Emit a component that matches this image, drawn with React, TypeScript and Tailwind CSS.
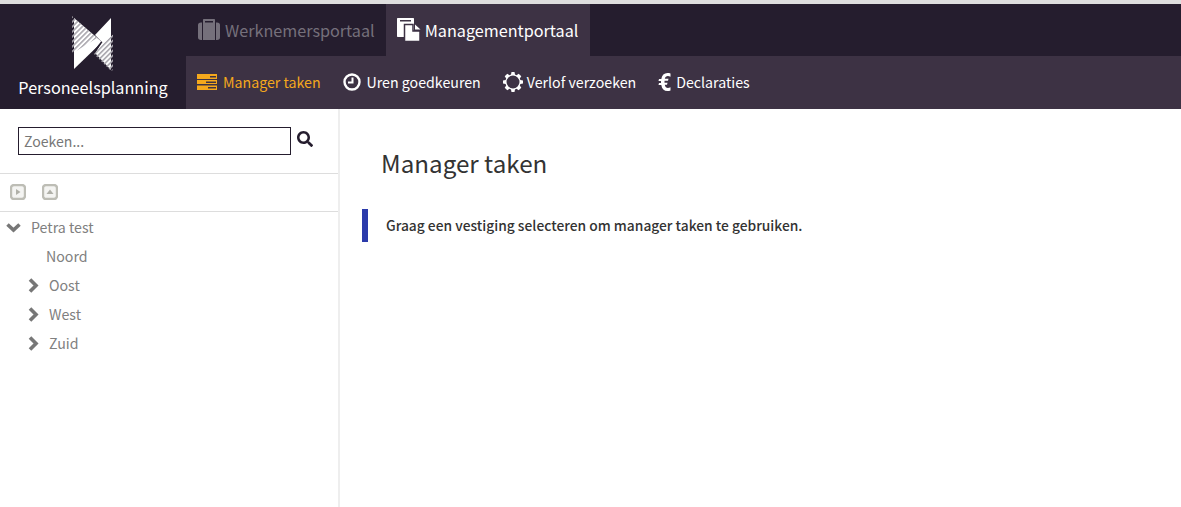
import React from 'react';
import { FaSearch } from 'react-icons/fa';

const LogoMark = () => (
  <svg width="44" height="56" viewBox="0 0 44 56" className="ml-[2px] block">
    <defs>
      <pattern id="hatch" width="3.500" height="3.500" patternUnits="userSpaceOnUse" patternTransform="rotate(-45)">
        <rect width="3.500" height="1.600" fill="#a9a6ad" />
      </pattern>
    </defs>
    <polygon points="2,2 30,26 2,53" fill="#ffffff" />
    <polygon points="39,2 23,19 30,26 23,37 39,54" fill="#ffffff" />
    <polygon points="0,0 25,22 1,37 0,36" fill="url(#hatch)" />
    <polygon points="32,27 22,38 39,55 41,54 41,18" fill="url(#hatch)" />
    <polygon points="29,25.500 30.500,26 23,37 21,36" fill="#251d2e" />
  </svg>
);

const BriefcaseIcon = () => (
  <svg width="24" height="22" viewBox="0 0 24 22" fill="#75707b">
    <path d="M8 4V2h8v2h2V1c0-.6-.4-1-1-1H7c-.6 0-1 .4-1 1v3z" />
    <path d="M6 3.500h12V21H6z" />
    <path d="M1 6c0-1.400 1-2.500 3-2.500h1V21H4c-2 0-3-1.100-3-2.500zM23 6c0-1.400-1-2.500-3-2.500h-1V21h1c2 0 3-1.100 3-2.500z" />
  </svg>
);

const PagesIcon = () => (
  <svg width="24" height="24" viewBox="0 0 24 24">
    <path d="M0 1c0-.6.4-1 1-1h15c.6 0 1 .4 1 1v17c0 .6-.4 1-1 1H1c-.6 0-1-.4-1-1z" fill="#ffffff" />
    <rect x="3" y="2" width="11" height="1.500" fill="#3d3244" />
    <path d="M7.500 6.500H16V13h7v10.500H7.500z" fill="#ffffff" stroke="#3d3244" strokeWidth="1.500" />
    <path d="M18 6.500l5.500 5H18z" fill="#ffffff" />
  </svg>
);

const TasksIcon = () => (
  <svg width="20" height="16" viewBox="0 0 20 16" fill="#f5a81c">
    <path fillRule="evenodd" d="M0 0h20v5H0zM13 2v1.500h6V2zM0 6h20v4H0zM9 7.500V9h10V7.500zM0 11.500h20V16H0zM11 13v1.500h8V13z" />
  </svg>
);

const ClockIcon = () => (
  <svg width="18" height="18" viewBox="0 0 18 18" fill="none" stroke="#ffffff">
    <circle cx="9" cy="9" r="7.500" strokeWidth="2.400" />
    <path d="M9.500 4.500V9.500H5" strokeWidth="2" />
  </svg>
);

const GearIcon = () => (
  <svg width="20" height="20" viewBox="0 0 20 20" fill="#ffffff">
    <path
      fillRule="evenodd"
      d="M8.500 0h3l.5 2.600 1.500.6L15.700 1.700l2.600 2.600-1.500 2.200.6 1.500L20 8.500v3l-2.600.5-.6 1.500 1.500 2.200-2.600 2.600-2.200-1.500-1.500.6-.5 2.600h-3L8 17.400l-1.500-.6-2.200 1.500-2.600-2.600 1.500-2.200-.6-1.500L0 11.500v-3l2.600-.5.6-1.500-1.500-2.200 2.600-2.600 2.200 1.500L8 2.600zM10 3.500a6.500 6.500 0 1 0 0 13 6.500 6.500 0 0 0 0-13z"
    />
  </svg>
);

const EuroIcon = () => (
  <svg width="13" height="18" viewBox="0 0 12 18" fill="#ffffff">
    <path d="M12 .5v3.200C11 3.200 10.200 3 9.400 3 7.800 3 6.700 4 6.300 5.800H10l-.5 2H6v2h3l-.5 2H6.300C6.700 14 7.800 15 9.400 15c.8 0 1.600-.2 2.600-.7v3.200c-1 .4-2 .5-3 .5-3.400 0-5.600-2-6.200-6H0l.5-2h2v-2H0l.5-2h2.300C3.400 2 5.600 0 9 0c1 0 2 .1 3 .5z" />
  </svg>
);

const ChevronDown = () => (
  <svg width="15" height="10" viewBox="0 0 15 10" className="mr-[10px]">
    <path d="M1.500 1.500l6 5.500 6-5.500" fill="none" stroke="#777777" strokeWidth="3.600" />
  </svg>
);

const ChevronRight = () => (
  <svg width="11" height="15" viewBox="0 0 11 15" className="mr-[10px]">
    <path d="M2 1.500l6 6-6 6" fill="none" stroke="#777777" strokeWidth="3.600" />
  </svg>
);

const NavItem = ({ icon, label, active, gap }: { icon: React.ReactNode; label: string; active?: boolean; gap: string }) => (
  <a className={`flex items-center text-[14.200px] ${gap} ${active ? 'text-[#f5a81c]' : 'text-white'}`}>
    {icon}
    <span>{label}</span>
  </a>
);

const TreeRow = ({ label, indent, icon }: { label: string; indent: string; icon?: React.ReactNode }) => (
  <div className={`flex h-[29px] items-center text-[14.200px] text-[#808080] ${indent}`}>
    {icon}
    <span>{label}</span>
  </div>
);

const SquareButton = ({ dir }: { dir: 'right' | 'up' }) => (
  <svg width="16" height="16" viewBox="0 0 16 16">
    <rect x="1" y="1" width="14" height="14" rx="3" fill="#f4f4f2" stroke="#bdbdb5" strokeWidth="2.400" />
    {dir === 'right' ? <polygon points="6,5 6,11 10.500,8" fill="#b0b0a8" /> : <polygon points="4.500,10 11.500,10 8,5.500" fill="#b0b0a8" />}
  </svg>
);

export default function App() {
  return (
    <div className="flex h-[507px] w-[1181px] flex-col overflow-hidden bg-white font-['Noto_Sans_CJK_SC','Noto_Sans',sans-serif]">
      <div className="h-[4px] shrink-0 bg-[#dedede]" />

      {/* Header */}
      <header className="flex h-[105px] shrink-0 bg-[#251d2e]">
        <div className="flex w-[186px] shrink-0 flex-col items-center pt-[12px]">
          <LogoMark />
          <div className="mt-[2px] text-[16.200px] leading-[26px] text-white">Personeelsplanning</div>
        </div>
        <div className="flex flex-1 flex-col">
          <div className="flex h-[52px] pl-[11px]">
            <a className="flex items-center gap-[4px] pr-[11px] text-[16.200px] text-[#75707b]">
              <BriefcaseIcon />
              <span>Werknemersportaal</span>
            </a>
            <a className="flex items-center gap-[4px] bg-[#3d3244] pl-[11px] pr-[12px] text-[16.200px] text-white">
              <PagesIcon />
              <span>Managementportaal</span>
            </a>
          </div>
          <nav className="flex h-[53px] items-center gap-[22px] bg-[#3d3244] pl-[11px]">
            <NavItem icon={<TasksIcon />} label="Manager taken" gap="gap-[6px]" active />
            <NavItem icon={<ClockIcon />} label="Uren goedkeuren" gap="gap-[6px]" />
            <NavItem icon={<GearIcon />} label="Verlof verzoeken" gap="gap-[4px]" />
            <NavItem icon={<EuroIcon />} label="Declaraties" gap="gap-[5px]" />
          </nav>
        </div>
      </header>

      <div className="flex min-h-0 flex-1">
        {/* Sidebar */}
        <aside className="w-[340px] shrink-0 border-r-2 border-[#eeeeee]">
          <div className="flex h-[65px] items-center gap-[6px] border-b border-[#dddddd] pl-[18px]">
            <input
              placeholder="Zoeken..."
              className="h-[28px] w-[273px] border border-[#251d2e] px-[5px] text-[14.100px] outline-none placeholder:text-[#777777]"
            />
            <FaSearch className="mb-[4px] text-[16px] text-[#251d2e]" />
          </div>
          <div className="flex h-[38px] items-center gap-[16px] border-b border-[#dddddd] pb-[2px] pl-[10px]">
            <SquareButton dir="right" />
            <SquareButton dir="up" />
          </div>
          <div className="pt-[1px]">
            <TreeRow label="Petra test" indent="pl-[6px]" icon={<ChevronDown />} />
            <TreeRow label="Noord" indent="pl-[46px]" />
            {['Oost', 'West', 'Zuid'].map((name) => (
              <TreeRow key={name} label={name} indent="pl-[28px]" icon={<ChevronRight />} />
            ))}
          </div>
        </aside>

        {/* Main */}
        <main className="min-w-0 flex-1 pl-[22px]">
          <h1 className="pl-[19px] pt-[35px] text-[24.200px] font-normal leading-[38px] text-[#333333]">Manager taken</h1>
          <div className="mt-[27px] flex h-[33px] items-center border-l-[6px] border-[#2b3bab] pl-[18px] text-[13.800px] font-medium text-[#333333]">
            Graag een vestiging selecteren om manager taken te gebruiken.
          </div>
        </main>
      </div>
    </div>
  );
}
